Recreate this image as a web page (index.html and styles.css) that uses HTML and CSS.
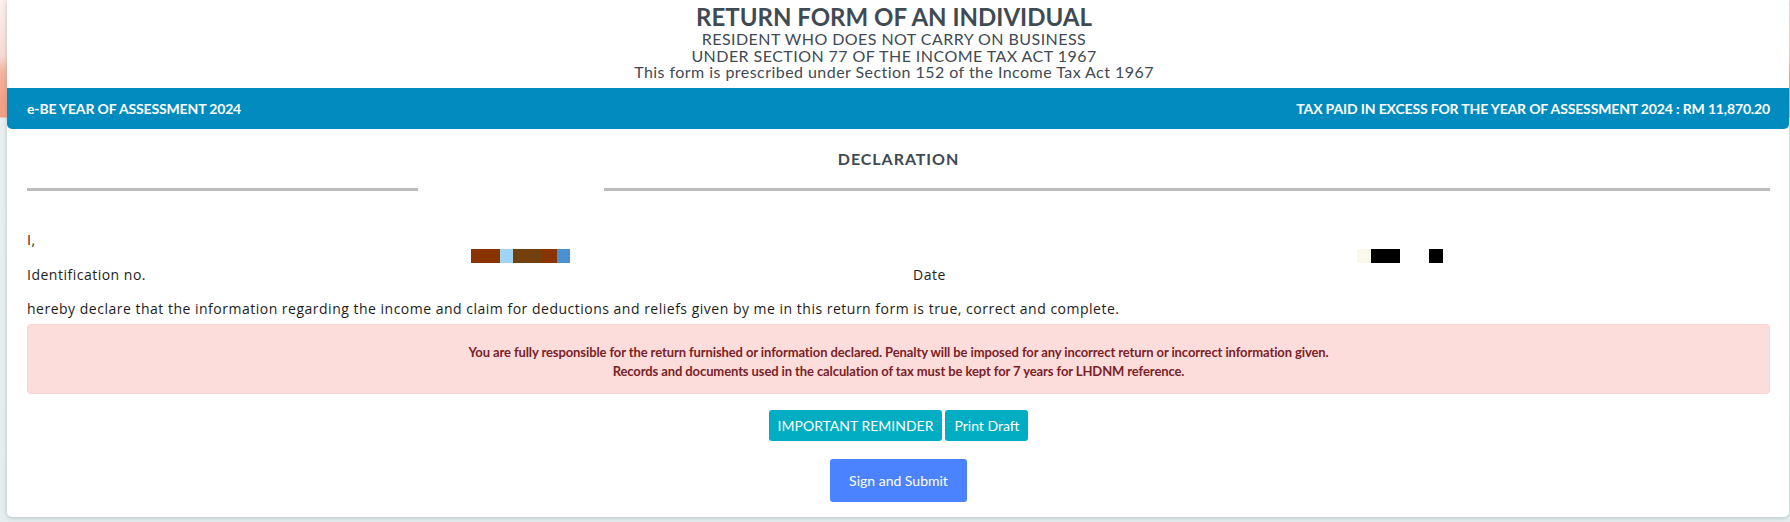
FILE: index.html
```html
<!DOCTYPE html>
<html lang="en">
<head>
<meta charset="utf-8">
<title>Return Form of an Individual</title>
<link rel="stylesheet" href="styles.css">
</head>
<body>
<div class="page">
  <div class="card">
    <header class="form-head">
      <h1 class="form-title">RETURN FORM OF AN INDIVIDUAL</h1>
      <p class="form-sub">RESIDENT WHO DOES NOT CARRY ON BUSINESS<br>UNDER SECTION 77 OF THE INCOME TAX ACT 1967<br>This form is prescribed under Section 152 of the Income Tax Act 1967</p>
    </header>
    <div class="info-bar">
      <span>e-BE YEAR OF ASSESSMENT 2024</span>
      <span>TAX PAID IN EXCESS FOR THE YEAR OF ASSESSMENT 2024 : RM 11,870.20</span>
    </div>
    <section class="content">
      <div class="section-head">
        <h2 class="section-title">DECLARATION</h2>
        <div class="rules">
          <span class="rule rule-left"></span>
          <span class="rule rule-right"></span>
        </div>
      </div>
      <div class="ident">
        <div class="ident-i">I,</div>
        <div class="redact redact-name">
          <span class="r1"></span><span class="r2"></span><span class="r3"></span><span class="r4"></span><span class="r5"></span>
        </div>
        <div class="redact redact-date">
          <span class="d1"></span><span class="d2"></span><span class="d3"></span><span class="d4"></span>
        </div>
        <div class="ident-label">Identification no.</div>
        <div class="date-label">Date</div>
      </div>
      <p class="declare">hereby declare that the information regarding the income and claim for deductions and reliefs given by me in this return form is true, correct and complete.</p>
      <div class="alert">
        You are fully responsible for the return furnished or information declared. Penalty will be imposed for any incorrect return or incorrect information given.<br>
        Records and documents used in the calculation of tax must be kept for 7 years for LHDNM reference.
      </div>
      <div class="actions">
        <button class="btn btn-info" type="button">IMPORTANT REMINDER</button>
        <button class="btn btn-info" type="button">Print Draft</button>
      </div>
      <div class="actions actions-submit">
        <button class="btn btn-primary" type="button">Sign and Submit</button>
      </div>
    </section>
  </div>
</div>
</body>
</html>
```

FILE: styles.css
```css
html, body {
  margin: 0;
  padding: 0;
}
body {
  width: 1790px;
  height: 522px;
  overflow: hidden;
  font-family: "Lato", "Open Sans", sans-serif;
  background-color: #e6edee;
  background-image: linear-gradient(to bottom, #fbeeec 0, #f7dcd5 55px, #f5b4a1 72px, #f3a088 100px, #f1a087 117px, #e9efef 118px, #e6edee 522px);
}
.page {
  padding: 0 1px 0 7px;
}
.card {
  background: #fff;
  height: 517px;
  border-radius: 0 0 5px 5px;
  box-shadow: 0 1px 4px rgba(120, 140, 145, 0.45);
  display: flex;
  flex-direction: column;
}
.form-head {
  height: 88px;
  text-align: center;
  color: #3f4a53;
  box-sizing: border-box;
  padding: 3px 8px 0 0;
}
.form-title {
  margin: 0;
  font-size: 24px;
  line-height: 28px;
  font-weight: 700;
}
.form-sub {
  margin: 0;
  font-size: 16px;
  line-height: 16.5px;
  font-weight: 400;
  letter-spacing: 0.45px;
}
.info-bar {
  height: 41px;
  background: #018bbf;
  border-radius: 0 0 5px 5px;
  color: #fff;
  display: flex;
  justify-content: space-between;
  align-items: center;
  padding: 0 19px 0 20px;
  font-size: 14px;
  font-weight: 700;
  letter-spacing: -0.15px;
}
.content {
  padding: 0 19px 0 20px;
  display: flex;
  flex-direction: column;
}
.section-head {
  padding-top: 19px;
}
.section-title {
  margin: 0;
  text-align: center;
  font-size: 16px;
  line-height: 22px;
  font-weight: 700;
  color: #3f4a53;
  letter-spacing: 0.95px;
}
.rules {
  display: flex;
  justify-content: space-between;
  margin-top: 18px;
}
.rule {
  display: block;
  height: 3px;
  background: #bcbcbc;
}
.rule-left { width: 391px; }
.rule-right { width: 1166px; }

.ident {
  margin-top: 39px;
  display: grid;
  grid-template-columns: 444px 442px 444px 1fr;
  grid-template-rows: 19px 14px 21px;
  font-family: "Open Sans", sans-serif;
  font-size: 14px;
  color: #1d1d1d;
  letter-spacing: 0.5px;
}
.ident-i { grid-column: 1; grid-row: 1; line-height: 19px; }
.redact { display: flex; height: 14px; }
.redact span { display: block; height: 14px; }
.redact-name { grid-column: 2; grid-row: 2; }
.redact-date { grid-column: 4; grid-row: 2; }
.r1 { width: 29px; background: #883300; }
.r2 { width: 13px; background: #a0d4f4; }
.r3 { width: 29px; background: #73400f; }
.r4 { width: 15px; background: #883300; }
.r5 { width: 13px; background: #4b91cf; }
.d1 { width: 14px; background: #fdf8ee; }
.d2 { width: 29px; background: #000; }
.d3 { width: 29px; background: #fff; }
.d4 { width: 14px; background: #000; }
.ident-label { grid-column: 1; grid-row: 3; line-height: 21px; padding-top: 1px; }
.date-label { grid-column: 3; grid-row: 3; line-height: 21px; padding-top: 1px; }

.declare {
  margin: 14px 0 0;
  font-family: "Open Sans", sans-serif;
  font-size: 14px;
  line-height: 21px;
  color: #1d1d1d;
  letter-spacing: 0.5px;
}
.alert {
  margin-top: 5px;
  height: 70px;
  box-sizing: border-box;
  background: #fddcdc;
  border: 1px solid #fcd2d2;
  border-radius: 4px;
  color: #7a2327;
  text-align: center;
  font-size: 13px;
  line-height: 18.5px;
  font-weight: 700;
  letter-spacing: -0.1px;
  padding-top: 18px;
}
.actions {
  display: flex;
  justify-content: center;
  gap: 3px;
  margin-top: 16px;
}
.actions-submit {
  margin-top: 18px;
}
.btn {
  border: 0;
  border-radius: 3px;
  color: #fff;
  font-family: "Lato", sans-serif;
  font-size: 14px;
  cursor: pointer;
}
.btn-info {
  background: #00adc2;
  height: 31px;
  padding: 0 9px;
}
.btn-primary {
  background: #4a83fd;
  height: 43px;
  width: 137px;
  padding: 0;
}
```
